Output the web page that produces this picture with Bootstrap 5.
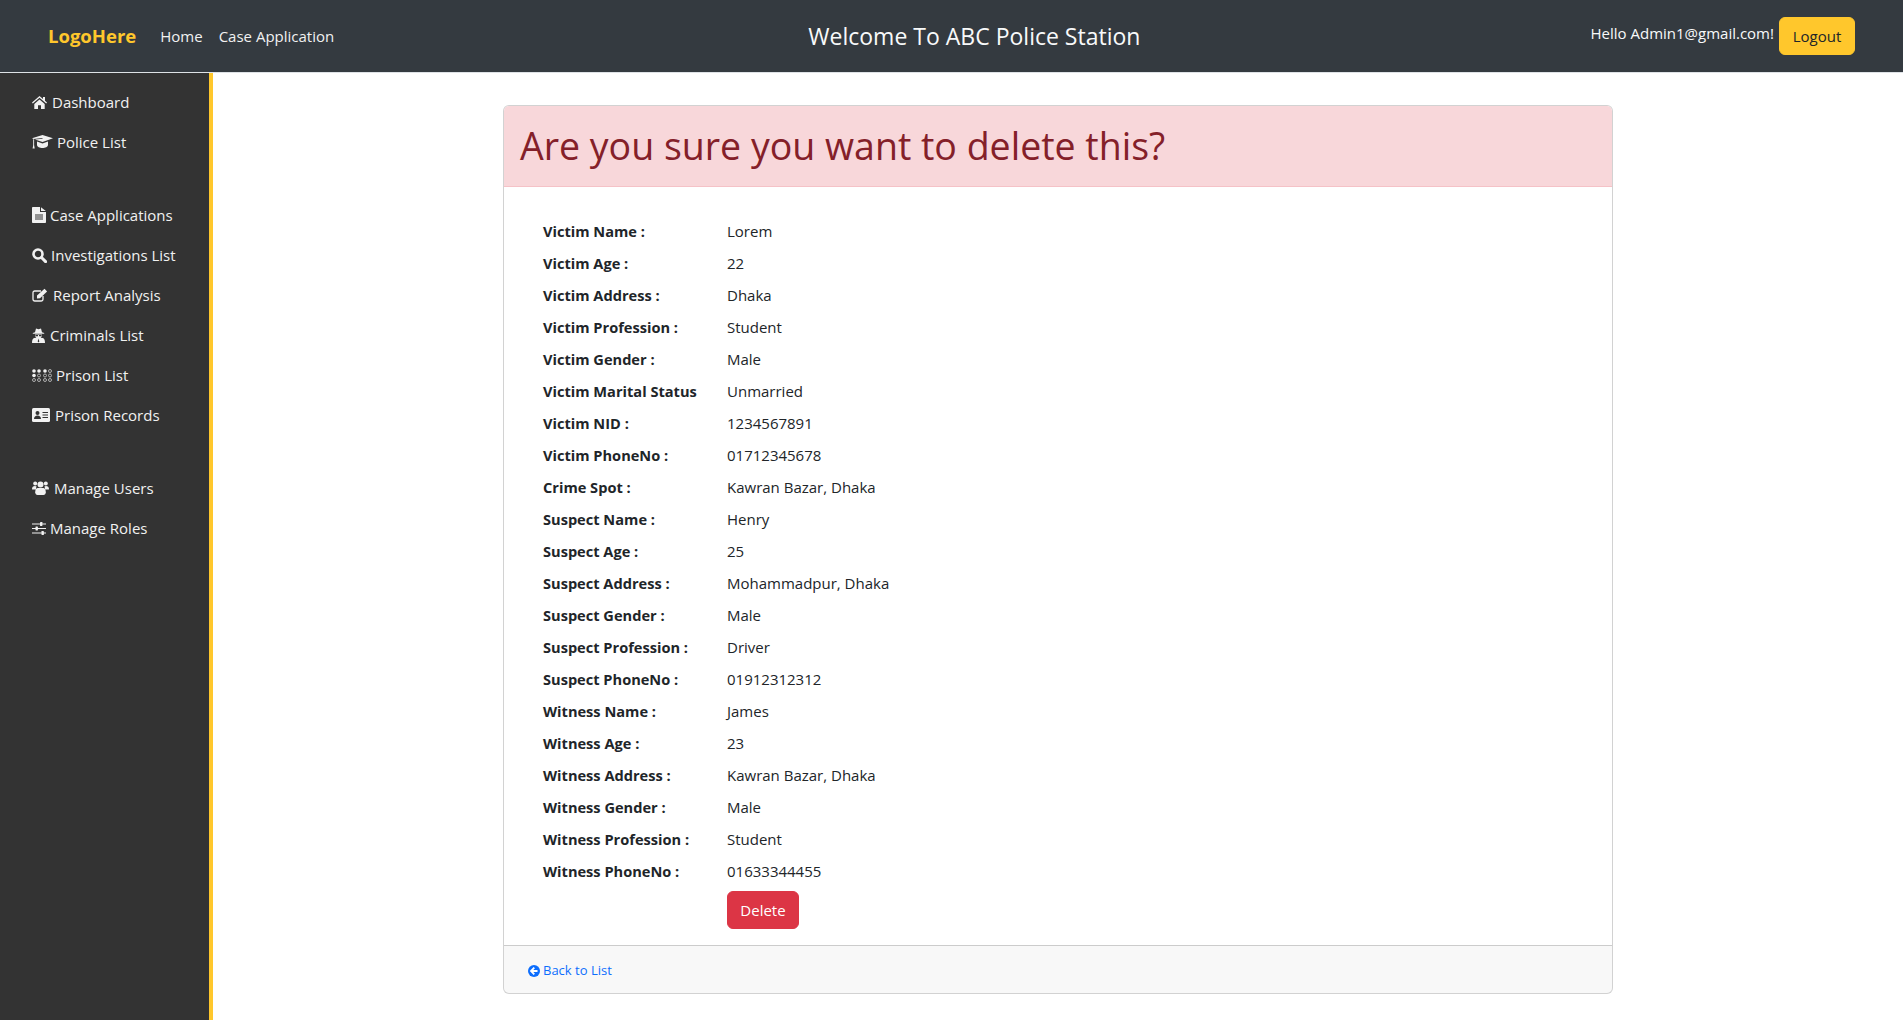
<!DOCTYPE html>
<html lang="en">
<head>
<meta charset="utf-8">
<title>Delete</title>
<link href="https://cdn.jsdelivr.net/npm/bootstrap@5.3.0/dist/css/bootstrap.min.css" rel="stylesheet">
<style>
:root{--ye:#ffc72c}
body{font-family:"Open Sans","Noto Sans",sans-serif;font-size:15px;color:#212529;background:#fff}
.topbar{height:73px;background:#343a40;border-bottom:1px solid #dee2e6;padding:0 48px 0 48px}
.brandlogo{color:var(--ye);font-weight:700;font-size:18.5px;margin-right:24px;text-decoration:none}
.toplink{color:#f1f1f1;text-decoration:none;margin-right:16px}
.toptitle{color:#f8f9fa;font-size:23px;padding-left:8px}
.hello{color:#f8f9fa;margin-right:5px;margin-top:-5px}
.btn-logout{background:var(--ye);border-color:var(--ye);color:#212529;font-size:15px;padding:7px 12px;height:38px;width:76px}
.shell{min-height:947px}
.sidepanel{width:213px;flex:none;background:#333;border-right:4px solid var(--ye);padding:9px 0 0 32px}
.sideitem{height:40px;color:#f1f1f1;text-decoration:none;white-space:nowrap}
.sideitem svg{display:block;margin-right:4px;flex:none}
.sidegap{height:33px}
.mainarea{padding:32px 0 0 290px}
.delcard{width:1110px}
.delhead{background:#f8d7da;border-color:#f5c2c7;color:#842029;padding:16px}
.delhead h1{font-size:37.5px;line-height:48px;margin:0;font-weight:400}
.bodywrap{padding:12px 0 0 19px}
.deltable{width:auto;margin:0}
.deltable td{padding:4px;background:transparent;line-height:24px;color:#212529;border:0}
.deltable td:first-child{width:184px;font-weight:700;font-size:14.6px}
.delbtn{width:72px;height:38px;font-size:15px;padding:6px 0}
.btnrow td{padding-bottom:0}
.delfoot{padding:12px 24px;font-size:13px;line-height:24px;height:48px}
.delfoot a{text-decoration:none;color:#0d6efd}
.delfoot svg{margin-right:3px;vertical-align:-1.5px}
</style>
</head>
<body>
<nav class="topbar d-flex align-items-center">
  <a class="brandlogo" href="#">LogoHere</a>
  <a class="toplink" href="#">Home</a>
  <a class="toplink" href="#">Case Application</a>
  <span class="toptitle mx-auto">Welcome To ABC Police Station</span>
  <span class="hello">Hello Admin1@gmail.com!</span>
  <a class="btn btn-logout" href="#">Logout</a>
</nav>
<div class="shell d-flex">
  <aside class="sidepanel">
    <a class="sideitem d-flex align-items-center" href="#"><svg width="15" height="13" viewBox="0 0 15 13" fill="#f1f1f1" style="margin-right:5px"><path d="M7.5 0L11 3V1h2v3.8L15 6.5l-.8 1L7.5 1.8.8 7.5 0 6.5z"/><path d="M2.3 8L7.5 3.5 12.7 8v5H9V9.2H6V13H2.3z"/></svg>Dashboard</a>
    <a class="sideitem d-flex align-items-center" href="#"><svg width="21" height="14" viewBox="0 0 21 14" fill="#f1f1f1"><path d="M10.5 0L21 3.3 10.5 7 3 4.4 10.6 3.7 10.4 3 1.6 3.9 0 3.3z"/><path d="M5 6.6L10.5 8.5 16 6.6V10c0 1.7-2.8 3-5.5 3S5 11.7 5 10z"/><path d="M1.2 4.2h.9V10l.6 3.6H.6L1.2 10z"/></svg>Police List</a>
    <div class="sidegap"></div>
    <a class="sideitem d-flex align-items-center" href="#"><svg width="14" height="16" viewBox="0 0 14 16" fill="#f1f1f1"><path d="M0 .8C0 .4.4 0 .8 0H8v5h6v10.2c0 .4-.4.8-.8.8H.8c-.4 0-.8-.4-.8-.8z"/><path d="M9 .2L13.8 4H9z"/><path d="M3 8h8M3 10h8M3 12h8" stroke="#333" stroke-width="1"/></svg>Case Applications</a>
    <a class="sideitem d-flex align-items-center" href="#"><svg width="15" height="15" viewBox="0 0 15 15" fill="none" stroke="#f1f1f1"><circle cx="6" cy="6" r="4.5" stroke-width="2.6"/><path d="M9.5 9.5L13.6 13.6" stroke-width="3" stroke-linecap="round"/></svg>Investigations List</a>
    <a class="sideitem d-flex align-items-center" href="#"><svg width="16" height="14" viewBox="0 0 16 14" style="margin-right:5px"><path d="M11 8v3.3c0 1-.7 1.7-1.7 1.7H2.7C1.7 13 1 12.3 1 11.3V4.7C1 3.7 1.7 3 2.7 3H9" fill="none" stroke="#f1f1f1" stroke-width="1.3"/><path d="M5 7.5L12.5.8l2.6 2.6L8 10.2 5 10.6z" fill="#f1f1f1"/></svg>Report Analysis</a>
    <a class="sideitem d-flex align-items-center" href="#"><svg width="13" height="15" viewBox="0 0 13 15" fill="#f1f1f1" style="margin-right:5px"><path d="M4 .5L6.5 1.3 9 .5 10 4.3 12.2 5v.8H.8V5L3 4.3z"/><path d="M3 6.5h7l-.4 2.3-1 .9 2.2.3C12.200 10.500 13 12 13 15H0c0-3 .8-4.500 2.200-5l2.200-.3-1-.9z"/><path d="M3.500 7h2.500v1.300h-2.500zM7 7h2.500v1.300H7z" fill="#333"/><path d="M6.500 10.500l.8 3-.8.900-.8-.9z" fill="#333"/></svg>Criminals List</a>
    <a class="sideitem d-flex align-items-center" href="#"><svg width="20" height="13" viewBox="0 0 20 13" style="margin-right:4px"><g fill="#f1f1f1"><circle cx="2" cy="2" r="1.800"/><circle cx="7" cy="2" r="1.800"/><circle cx="2" cy="6.500" r="1.800"/><circle cx="13" cy="2" r="1.800"/></g><g fill="none" stroke="#bbb" stroke-width=".9"><circle cx="7" cy="6.500" r="1.500"/><circle cx="2" cy="11" r="1.500"/><circle cx="7" cy="11" r="1.500"/><circle cx="18" cy="2" r="1.500"/><circle cx="13" cy="6.500" r="1.500"/><circle cx="18" cy="6.500" r="1.500"/><circle cx="13" cy="11" r="1.500"/><circle cx="18" cy="11" r="1.500"/></g></svg>Prison List</a>
    <a class="sideitem d-flex align-items-center" href="#"><svg width="18" height="14" viewBox="0 0 18 14" style="margin-right:5px"><rect width="18" height="14" rx="1.500" fill="#f1f1f1"/><circle cx="5.500" cy="5" r="2" fill="#333"/><path d="M2 11c0-2.200 1.500-3.500 3.500-3.500S9 8.800 9 11z" fill="#333"/><path d="M10.500 4.500H16M10.500 7H16M10.500 9.500H16" stroke="#333" stroke-width="1.200"/></svg>Prison Records</a>
    <div class="sidegap"></div>
    <a class="sideitem d-flex align-items-center" href="#"><svg width="17" height="14" viewBox="0 0 17 14" fill="#f1f1f1" style="margin-right:5px"><circle cx="3.200" cy="2.500" r="2"/><circle cx="13.800" cy="2.500" r="2"/><circle cx="8.500" cy="3.600" r="3"/><path d="M0 8.200C0 6 1.200 5 3 5c.8 0 1.300.3 1.600.6-.5.900-.6 1.800-.6 2.800H1c-.6 0-1-.1-1-.2zM17 8.200C17 6 15.800 5 14 5c-.8 0-1.300.3-1.600.6.500.9.600 1.800.6 2.800h3c.6 0 1-.1 1-.2z"/><path d="M5.500 7h6c1.500.3 2.300 1.900 2.300 4.300 0 1.600-1 2.700-2.300 2.700h-6c-1.300 0-2.300-1.100-2.300-2.700C3.200 8.900 4 7.300 5.500 7z"/></svg>Manage Users</a>
    <a class="sideitem d-flex align-items-center" href="#"><svg width="14" height="13" viewBox="0 0 14 13" fill="#f1f1f1"><path d="M0 1.500h14v1.100H0zM0 6h14v1.100H0zM0 10.500h14v1.100H0z"/><rect x="8" y="0" width="2.400" height="4" rx=".4"/><rect x="3.500" y="4.500" width="2.400" height="4" rx=".4"/><rect x="9.500" y="9" width="2.400" height="4" rx=".4"/></svg>Manage Roles</a>
  </aside>
  <main class="mainarea">
    <div class="card delcard">
      <div class="card-header delhead"><h1>Are you sure you want to delete this?</h1></div>
      <div class="card-body">
        <div class="bodywrap">
          <table class="table table-sm table-borderless deltable">
            <tbody>
              <tr><td>Victim Name :</td><td>Lorem</td></tr>
              <tr><td>Victim Age :</td><td>22</td></tr>
              <tr><td>Victim Address :</td><td>Dhaka</td></tr>
              <tr><td>Victim Profession :</td><td>Student</td></tr>
              <tr><td>Victim Gender :</td><td>Male</td></tr>
              <tr><td>Victim Marital Status</td><td>Unmarried</td></tr>
              <tr><td>Victim NID :</td><td>1234567891</td></tr>
              <tr><td>Victim PhoneNo :</td><td>01712345678</td></tr>
              <tr><td>Crime Spot :</td><td>Kawran Bazar, Dhaka</td></tr>
              <tr><td>Suspect Name :</td><td>Henry</td></tr>
              <tr><td>Suspect Age :</td><td>25</td></tr>
              <tr><td>Suspect Address :</td><td>Mohammadpur, Dhaka</td></tr>
              <tr><td>Suspect Gender :</td><td>Male</td></tr>
              <tr><td>Suspect Profession :</td><td>Driver</td></tr>
              <tr><td>Suspect PhoneNo :</td><td>01912312312</td></tr>
              <tr><td>Witness Name :</td><td>James</td></tr>
              <tr><td>Witness Age :</td><td>23</td></tr>
              <tr><td>Witness Address :</td><td>Kawran Bazar, Dhaka</td></tr>
              <tr><td>Witness Gender :</td><td>Male</td></tr>
              <tr><td>Witness Profession :</td><td>Student</td></tr>
              <tr><td>Witness PhoneNo :</td><td>01633344455</td></tr>
              <tr class="btnrow"><td></td><td><button class="btn btn-danger delbtn" type="button">Delete</button></td></tr>
            </tbody>
          </table>
        </div>
      </div>
      <div class="card-footer delfoot">
        <a href="#"><svg width="12" height="12" viewBox="0 0 12 12"><circle cx="6" cy="6" r="6" fill="#0d6efd"/><path d="M6.300 2.600L3 6l3.300 3.400M3.400 6H9.500" fill="none" stroke="#fff" stroke-width="1.800"/></svg>Back to List</a>
      </div>
    </div>
  </main>
</div>
<script src="https://cdn.jsdelivr.net/npm/bootstrap@5.3.0/dist/js/bootstrap.bundle.min.js"></script>
</body>
</html>
